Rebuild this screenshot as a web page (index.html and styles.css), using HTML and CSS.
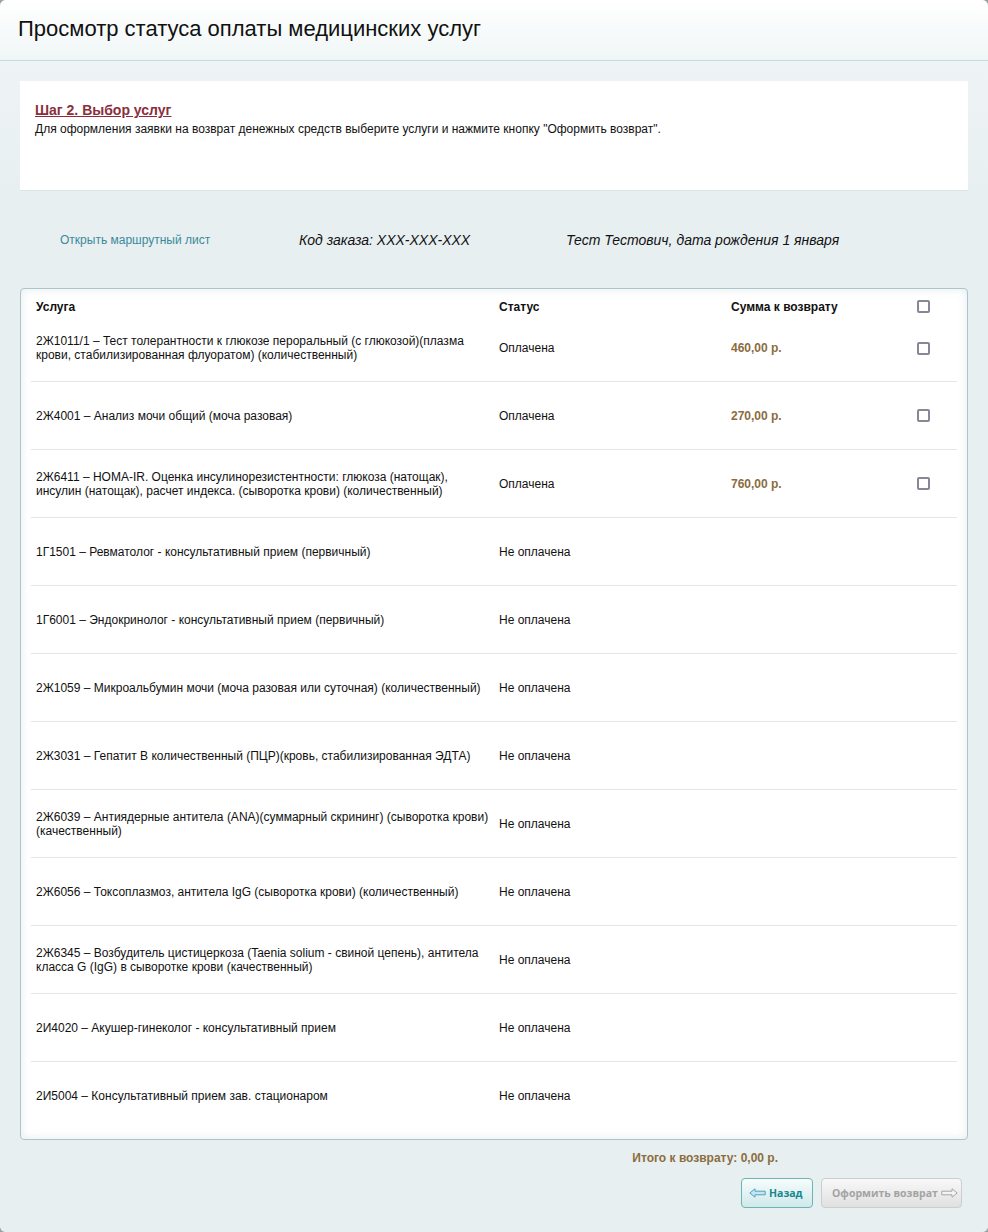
FILE: index.html
```html
<!DOCTYPE html>
<html lang="ru">
<head>
<meta charset="utf-8">
<title>Просмотр статуса оплаты медицинских услуг</title>
<link rel="stylesheet" href="styles.css">
</head>
<body>
<div class="window">
  <header class="win-head">
    <h1 class="win-title">Просмотр статуса оплаты медицинских услуг</h1>
  </header>
  <main class="win-body">
    <section class="step-panel">
      <h2 class="step-title">Шаг 2. Выбор услуг</h2>
      <p class="step-text">Для оформления заявки на возврат денежных средств выберите услуги и нажмите кнопку "Оформить возврат".</p>
    </section>

    <div class="meta">
      <a class="meta-link" href="#">Открыть маршрутный лист</a>
      <span class="meta-info">Код заказа: XXX-XXX-XXX</span>
      <span class="meta-info">Тест Тестович, дата рождения 1 января</span>
    </div>

    <section class="card">
      <div class="row row-head">
        <div class="cell">Услуга</div>
        <div class="cell">Статус</div>
        <div class="cell">Сумма к возврату</div>
        <div class="cell cell-check"><span class="check"></span></div>
      </div>
      <div class="row row-first">
        <div class="cell">2Ж1011/1 – Тест толерантности к глюкозе пероральный (с глюкозой)(плазма крови, стабилизированная флуоратом) (количественный)</div>
        <div class="cell">Оплачена</div>
        <div class="cell sum">460,00 р.</div>
        <div class="cell cell-check"><span class="check"></span></div>
      </div>
      <div class="row">
        <div class="cell">2Ж4001 – Анализ мочи общий (моча разовая)</div>
        <div class="cell">Оплачена</div>
        <div class="cell sum">270,00 р.</div>
        <div class="cell cell-check"><span class="check"></span></div>
      </div>
      <div class="row">
        <div class="cell">2Ж6411 – HOMA-IR. Оценка инсулинорезистентности: глюкоза (натощак), инсулин (натощак), расчет индекса. (сыворотка крови) (количественный)</div>
        <div class="cell">Оплачена</div>
        <div class="cell sum">760,00 р.</div>
        <div class="cell cell-check"><span class="check"></span></div>
      </div>
      <div class="row">
        <div class="cell">1Г1501 – Ревматолог - консультативный прием (первичный)</div>
        <div class="cell">Не оплачена</div>
        <div class="cell"></div>
        <div class="cell"></div>
      </div>
      <div class="row">
        <div class="cell">1Г6001 – Эндокринолог - консультативный прием (первичный)</div>
        <div class="cell">Не оплачена</div>
        <div class="cell"></div>
        <div class="cell"></div>
      </div>
      <div class="row">
        <div class="cell">2Ж1059 – Микроальбумин мочи (моча разовая или суточная) (количественный)</div>
        <div class="cell">Не оплачена</div>
        <div class="cell"></div>
        <div class="cell"></div>
      </div>
      <div class="row">
        <div class="cell">2Ж3031 – Гепатит В количественный (ПЦР)(кровь, стабилизированная ЭДТА)</div>
        <div class="cell">Не оплачена</div>
        <div class="cell"></div>
        <div class="cell"></div>
      </div>
      <div class="row">
        <div class="cell">2Ж6039 – Антиядерные антитела (ANA)(суммарный скрининг) (сыворотка крови) (качественный)</div>
        <div class="cell">Не оплачена</div>
        <div class="cell"></div>
        <div class="cell"></div>
      </div>
      <div class="row">
        <div class="cell">2Ж6056 – Токсоплазмоз, антитела IgG (сыворотка крови) (количественный)</div>
        <div class="cell">Не оплачена</div>
        <div class="cell"></div>
        <div class="cell"></div>
      </div>
      <div class="row">
        <div class="cell">2Ж6345 – Возбудитель цистицеркоза (Taenia solium - свиной цепень), антитела класса G (IgG) в сыворотке крови (качественный)</div>
        <div class="cell">Не оплачена</div>
        <div class="cell"></div>
        <div class="cell"></div>
      </div>
      <div class="row">
        <div class="cell">2И4020 – Акушер-гинеколог - консультативный прием</div>
        <div class="cell">Не оплачена</div>
        <div class="cell"></div>
        <div class="cell"></div>
      </div>
      <div class="row row-last">
        <div class="cell">2И5004 – Консультативный прием зав. стационаром</div>
        <div class="cell">Не оплачена</div>
        <div class="cell"></div>
        <div class="cell"></div>
      </div>
    </section>

    <div class="total">Итого к возврату: 0,00 р.</div>

    <div class="actions">
      <button class="btn btn-back" type="button">
        <svg class="arrow" width="17" height="10" viewBox="0 0 17 10"><path d="M0.8 5 L6 0.8 L6 3.2 L16.2 3.2 L16.2 6.8 L6 6.8 L6 9.2 Z" fill="#c3e6f2" stroke="#4fa3bf" stroke-width="1" stroke-linejoin="round"/></svg>
        <span>Назад</span>
      </button>
      <button class="btn btn-disabled" type="button" disabled>
        <span>Оформить возврат</span>
        <svg class="arrow" width="17" height="10" viewBox="0 0 17 10"><path d="M16.2 5 L11 0.8 L11 3.2 L0.8 3.2 L0.8 6.8 L11 6.8 L11 9.2 Z" fill="#f4f4f4" stroke="#a6a6a6" stroke-width="1" stroke-linejoin="round"/></svg>
      </button>
    </div>
  </main>
</div>
</body>
</html>
```

FILE: styles.css
```css
html, body {
  margin: 0;
  padding: 0;
}
html {
  background: #9aa4a6;
}
body {
  font-family: "Liberation Sans", Arial, sans-serif;
  font-size: 12px;
  color: #111;
}
.window {
  width: 988px;
  height: 1232px;
  box-sizing: border-box;
  border-radius: 6px;
  overflow: hidden;
  background: #e8eff1;
  display: flex;
  flex-direction: column;
}
.win-head {
  height: 60px;
  border-bottom: 1px solid #c9dcdd;
  background: linear-gradient(#ffffff, #f0f6f6);
  display: flex;
  align-items: center;
  padding: 0 18px;
  flex-shrink: 0;
}
.win-title {
  margin: 0;
  font-weight: normal;
  font-size: 22px;
  color: #111;
  line-height: 26px;
  padding-bottom: 2px;
}
.win-body {
  flex: 1;
  padding: 20px 20px 0;
  background: linear-gradient(#eef4f5 0, #e8eff1 140px, #e8eff1 100%);
}
.step-panel {
  background: #fff;
  height: 110px;
  box-sizing: border-box;
  padding: 20px 15px;
  border-bottom: 1px solid #dbe4e6;
}
.step-title {
  margin: 0 0 3px;
  font-size: 14px;
  line-height: 18px;
  font-weight: bold;
  color: #8a2e3c;
  text-decoration: underline;
}
.step-text {
  margin: 0;
  font-size: 12px;
  line-height: 14px;
  color: #111;
}
.meta {
  margin-top: 38px;
  height: 22px;
  display: grid;
  grid-template-columns: 239px 267px 1fr;
  align-items: center;
  padding-left: 40px;
}
.meta-link {
  color: #3a8a9b;
  text-decoration: none;
  font-size: 12px;
}
.meta-info {
  font-style: italic;
  font-size: 14px;
  color: #111;
}
.card {
  margin-top: 37px;
  background: #fff;
  border: 1px solid #a9c6cc;
  border-radius: 4px;
  padding: 0 10px 9px;
  box-shadow: inset 0 0 10px rgba(120, 140, 150, 0.18);
}
.row {
  display: grid;
  grid-template-columns: 463px 232px 181px 1fr;
  height: 68px;
  box-sizing: border-box;
  align-items: center;
  border-bottom: 1px solid #e3e7e8;
}
.row-head {
  height: 35px;
  border-bottom: none;
  font-weight: bold;
}
.row-first {
  height: 58px;
  padding-bottom: 9px;
}
.row-last {
  border-bottom: none;
}
.cell {
  padding: 0 5px;
  line-height: 14px;
}
.cell-check {
  padding-left: 10px;
  display: flex;
}
.check {
  width: 13px;
  height: 13px;
  box-sizing: border-box;
  border: 2px solid #888697;
  border-radius: 2px;
  background: #fff;
}
.sum {
  font-weight: bold;
  color: #8a6d3e;
}
.total {
  margin-top: 10px;
  text-align: right;
  padding-right: 190px;
  font-weight: bold;
  color: #8a6d3e;
  line-height: 16px;
}
.actions {
  margin-top: 12px;
  display: flex;
  justify-content: flex-end;
  gap: 8px;
  padding-right: 6px;
}
.btn {
  height: 30px;
  box-sizing: border-box;
  border-radius: 4px;
  font-family: "Open Sans", "Liberation Sans", sans-serif;
  font-weight: bold;
  font-size: 10.5px;
  white-space: nowrap;
  display: flex;
  align-items: center;
  gap: 3px;
  cursor: pointer;
}
.btn-back {
  width: 72px;
  padding: 0 0 0 7px;
  border: 1px solid #6cb4b6;
  background: linear-gradient(#f7fcfc, #cfe9ea);
  color: #17878f;
}
.btn-disabled {
  width: 141px;
  padding: 0 0 0 10px;
  border: 1px solid #cdcdcd;
  background: linear-gradient(#f8f8f8, #e0e0e0);
  color: #a3a3a3;
  cursor: default;
}
.arrow {
  display: block;
  flex-shrink: 0;
}
```
